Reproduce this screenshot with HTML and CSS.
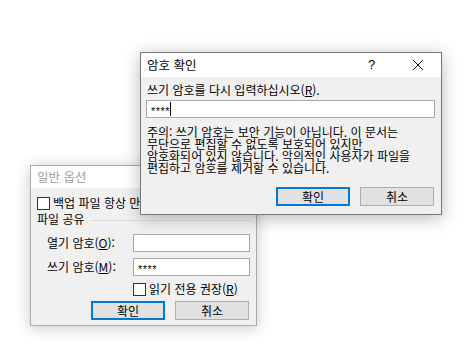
FILE: index.html
```html
<!DOCTYPE html>
<html lang="ko">
<head>
<meta charset="utf-8">
<link rel="stylesheet" href="styles.css">
</head>
<body>
<div class="desktop">
  <div class="win back">
    <div class="titlebar inactive"><span class="title">일반 옵션</span></div>
    <div class="body back-body">
      <div class="check-row">
        <span class="box"></span><span>백업 파일 항상 만들기</span>
      </div>
      <div class="group-head"><span>파일 공유</span><span class="rule"></span></div>
      <div class="field-row">
        <span class="flabel">열기 암호(<u>O</u>):</span>
        <span class="input"></span>
      </div>
      <div class="field-row">
        <span class="flabel">쓰기 암호(<u>M</u>):</span>
        <span class="input"><span class="stars">****</span></span>
      </div>
      <div class="check-row ro">
        <span class="box"></span><span>읽기 전용 권장(<u>R</u>)</span>
      </div>
      <div class="btn-row">
        <span class="btn default">확인</span>
        <span class="btn">취소</span>
      </div>
    </div>
  </div>

  <div class="win front">
    <div class="titlebar">
      <span class="title">암호 확인</span>
      <span class="help">?</span>
      <svg class="close" width="12" height="12" viewBox="0 0 12 12"><path d="M1 1L11 11M11 1L1 11" stroke="#111" stroke-width="1"/></svg>
    </div>
    <div class="body front-body">
      <div class="prompt">쓰기 암호를 다시 입력하십시오(<u>R</u>).</div>
      <div class="input wide"><span class="stars">****</span><span class="caret"></span></div>
      <p class="note">주의: 쓰기 암호는 보안 기능이 아닙니다. 이 문서는<br>무단으로 편집할 수 없도록 보호되어 있지만<br>암호화되어 있지 않습니다. 악의적인 사용자가 파일을<br>편집하고 암호를 제거할 수 있습니다.</p>
      <div class="btn-row">
        <span class="btn default">확인</span>
        <span class="btn">취소</span>
      </div>
    </div>
  </div>
</div>
</body>
</html>
```

FILE: styles.css
```css
html, body {
  margin: 0;
  padding: 0;
  background: #ffffff;
}
body {
  font-family: "Noto Sans CJK KR", "Noto Sans", sans-serif;
  font-size: 12px;
  color: #000;
}
.desktop {
  position: relative;
  width: 468px;
  height: 352px;
  overflow: hidden;
}
.win {
  position: absolute;
  box-sizing: border-box;
  display: flex;
  flex-direction: column;
  background: #f0f0f0;
}
.back {
  left: 30px;
  top: 165px;
  width: 227px;
  height: 161px;
  border: 1px solid #aaaaaa;
  box-shadow: 0 2px 14px rgba(0,0,0,0.22);
}
.front {
  left: 140px;
  top: 52px;
  width: 302px;
  height: 163px;
  border: 1px solid #777777;
  box-shadow: 0 3px 16px rgba(0,0,0,0.28);
}
.titlebar {
  background: #ffffff;
  height: 24px;
  display: flex;
  align-items: center;
  padding: 0 0 0 6px;
  flex: none;
  line-height: 14px;
}
.back .titlebar { height: 22px; }
.titlebar .title { flex: 1; font-size: 12.5px; }
.titlebar.inactive .title { color: #a0a0a0; }
.help {
  width: 12px;
  font-size: 13px;
  margin-right: 32px;
  font-family: "Liberation Sans", sans-serif;
}
.close { margin-right: 17px; }

.body { flex: 1; display: flex; flex-direction: column; }
u { text-decoration: underline; text-underline-offset: 1px; }

/* back dialog */
.back-body { padding: 8px 6px 0 6px; }
.check-row {
  display: flex;
  align-items: center;
  gap: 3px;
  height: 14px;
  line-height: 14px;
  white-space: nowrap;
}
.box {
  width: 11px;
  height: 11px;
  border: 1px solid #333;
  background: #fff;
  flex: none;
}
.group-head {
  display: flex;
  align-items: center;
  gap: 6px;
  margin-top: 2px;
  height: 14px;
  line-height: 14px;
}
.rule { flex: 1; height: 1px; background: #dcdcdc; margin-top: 2px; }
.field-row {
  display: flex;
  align-items: center;
  height: 18px;
}
.field-row + .field-row { margin-top: 6px; }
.group-head + .field-row { margin-top: 8px; }
.flabel {
  width: 86px;
  margin-left: 10px;
  white-space: nowrap;
  line-height: 14px;
}
.input {
  box-sizing: border-box;
  width: 117px;
  height: 18px;
  border: 1px solid #a9a9a9;
  background: #fff;
  display: flex;
  align-items: center;
  padding-left: 4px;
}
.stars {
  font-family: "Liberation Sans", sans-serif;
  font-size: 11px;
  letter-spacing: 0.5px;
  padding-top: 3px;
}
.ro { margin-top: 6px; margin-left: 96px; }
.btn-row {
  display: flex;
  gap: 10px;
  margin-top: 5px;
  margin-left: 54px;
}
.btn {
  box-sizing: border-box;
  width: 74px;
  height: 19px;
  border: 1px solid #adadad;
  background: #e1e1e1;
  display: flex;
  align-items: center;
  justify-content: center;
  line-height: 14px;
}
.btn.default { border: 2px solid #0078d7; }

/* front dialog */
.front-body { padding: 6px 5px 0 5px; }
.prompt { margin-left: 1px; height: 14px; line-height: 14px; margin-top: 0; }
.input.wide { width: 289px; margin-top: 3px; }
.caret { width: 1px; height: 14px; background: #000; margin-left: 0; }
.note {
  margin: 8px 0 0 1px;
  line-height: 12px;
  white-space: nowrap;
}
.front .btn-row { margin-top: 13px; margin-left: 130px; }
```
